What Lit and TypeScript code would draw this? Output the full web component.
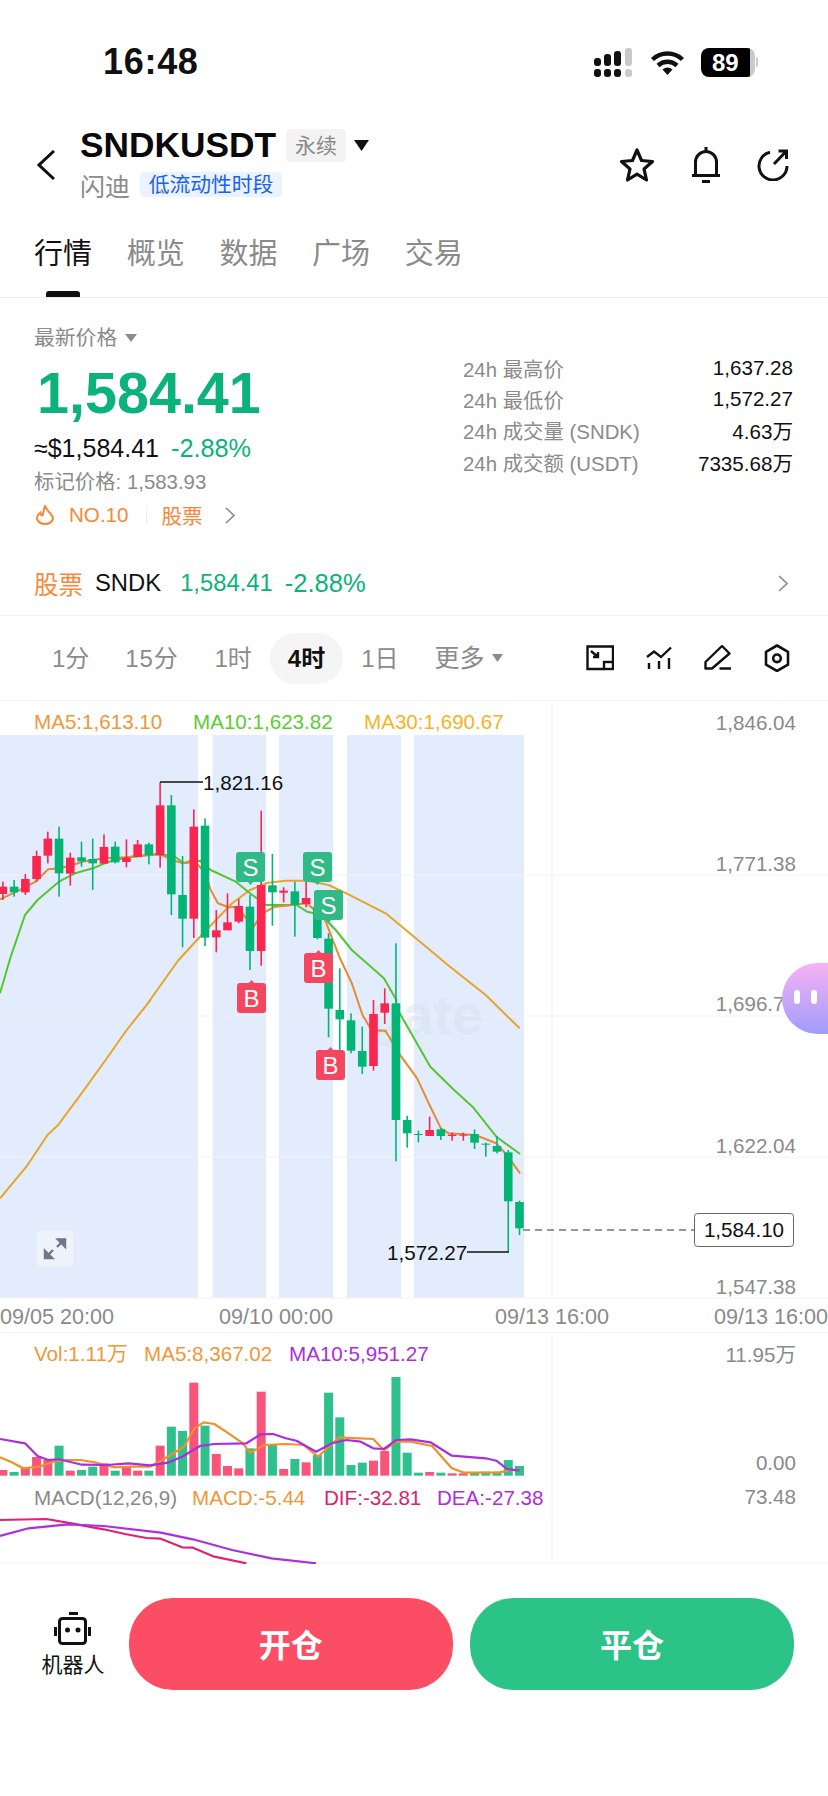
import { LitElement, html, css, svg } from "lit";
import { customElement } from "lit/decorators.js";

type C = [string, number, number, number, number];
// y values are measured in (y-700)*3 units
const candles: C[] = [
  ["r",545,600,560,582],["g",540,590,560,577],["r",522,585,537,577],["r",452,545,468,537],
  ["r",395,490,416,467],["g",380,590,416,520],["r",458,557,473,521],["g",425,500,472,484],
  ["g",416,570,477,490],["r",403,492,441,491],["g",425,490,440,487],["r",418,502,473,486],
  ["r",420,472,433,471],["g",428,493,433,466],["r",247,503,316,466],["g",285,645,316,583],
  ["g",468,742,585,656],["r",328,714,380,656],["g",355,738,377,713],["r",630,757,691,712],
  ["r",580,690,667,691],["r",597,670,618,665],["g",585,810,620,753],["r",332,797,555,753],
  ["g",462,677,556,577],["r",562,607,572,578],["g",545,710,574,615],["r",545,622,594,612],
  ["g",600,718,620,714],["g",700,1012,716,926],["g",805,1055,930,958],["g",940,1060,961,1052],
  ["g",980,1122,1053,1100],["r",900,1112,942,1098],["r",865,972,910,938],["g",730,1384,910,1260],
  ["g",1247,1343,1260,1300],["g",1292,1327,1302,1305],["r",1250,1308,1290,1308],["g",1285,1320,1288,1308],
  ["r",1298,1322,1304,1308],["r",1298,1322,1304,1307],["g",1288,1347,1302,1328],["g",1328,1370,1331,1334],
  ["g",1308,1360,1338,1355],["g",1350,1655,1357,1504],["g",1502,1605,1506,1585],
];
const vols: [string, number][] = [
  ["r",450],["g",456],["r",443],["r",411],["r",420],["g",377],["r",452],["g",450],["g",440],["r",430],
  ["g",452],["r",440],["r",452],["g",452],["r",377],["g",320],["g",333],["r",188],["g",317],["r",402],
  ["r",438],["r",445],["g",385],["r",215],["g",372],["r",447],["g",417],["r",427],["g",405],["g",218],
  ["g",292],["g",435],["g",428],["r",422],["r",393],["g",171],["g",398],["g",458],["r",456],["g",458],
  ["r",460],["r",460],["g",458],["g",455],["g",455],["g",420],["g",438],
];
const cx = (i: number) => 2.9 + 11.23 * i;
const Y = (z: number) => 700 + z / 3;
const VY = (z: number) => 1320 + z / 3;

const pts = (a: number[][], fy: (n: number) => number) =>
  a.map(([x, y]) => `${(x / 2.8).toFixed(1)},${fy(y).toFixed(1)}`).join(" ");
const pts4 = (a: number[][]) =>
  a.map(([x, y]) => `${(x / 1.894).toFixed(1)},${(1000 + y / 3).toFixed(1)}`).join(" ");

const ma30 = pts4([[0,595],[50,500],[90,405],[110,375],[150,290],[200,180],[240,90],[285,0]]) + " " +
  pts([[400,930],[500,780],[560,710],[600,665],[650,610],[700,570],[750,548],[800,542],[860,542],[920,555],[970,580],[1080,640],[1170,720],[1260,800],[1360,885],[1455,985]], Y);
const ma10 = pts([[0,880],[30,770],[70,645],[105,600],[165,545],[210,520],[260,505],[300,487],[355,472],[415,465],[449,462],[490,470],[515,490],[560,482],[590,510],[660,545],[700,580],[745,615],[800,615],[830,615],[860,635],[900,645],[940,690],[985,750],[1075,835],[1110,900]], Y) + " " +
  pts4([[750,20],[815,200],[860,270],[895,320],[940,410],[985,462]]);
const ma5 = pts([[0,598],[40,578],[100,545],[135,508],[166,505],[198,497],[230,485],[260,480],[292,475],[355,472],[418,465],[449,462],[481,480],[512,490],[543,480],[575,520],[590,570],[610,610],[640,622],[670,620],[685,650],[710,680],[735,640],[770,620],[800,617],[860,610],[890,640],[910,660],[950,770],[985,850],[1015,945],[1040,990],[1080,992]], Y) + " " +
  pts4([[715,92],[730,92],[760,170],[790,235],[815,320],[835,385],[850,400],[900,405],[940,430],[960,465],[985,520]]);

const volMa5 = pts([[0,412],[30,425],[65,445],[110,440],[150,425],[190,420],[225,420],[270,428],[320,442],[370,440],[420,440],[470,410],[515,380],[545,325],[570,307],[600,312],[640,340],[680,370],[700,398],[740,375],[800,372],[850,375],[890,410],[950,352],[1045,357],[1075,390],[1110,365],[1150,365],[1210,378],[1265,445],[1300,458],[1400,457],[1430,450],[1455,452]], VY);
const volMa10 = pts([[0,357],[70,370],[105,408],[135,420],[165,418],[230,434],[300,435],[360,430],[420,436],[470,428],[510,410],[560,378],[600,372],[690,370],[730,343],[765,342],[800,355],[830,362],[885,395],[930,370],[970,360],[1010,365],[1045,385],[1075,387],[1110,360],[1150,358],[1205,367],[1265,407],[1360,415],[1390,422],[1420,447],[1455,452]], VY);
const dif = pts([[0,600],[130,597],[200,610],[290,628],[350,642],[410,654],[450,656],[510,682],[540,683],[600,710],[690,730]], VY);
const dea = pts([[0,648],[80,625],[190,613],[290,618],[450,638],[540,658],[650,690],[760,715],[885,730]], VY);

const bands = [[0,198],[212.5,266],[279,333],[347,401],[414,524]];

const sBadge = (x: number, y: number) => svg`
  <path class="bs" d="M${x + 11} ${y + 29}l3.5 4 3.5-4z"></path>
  <rect class="bs" x=${x} y=${y} width="29" height="30" rx="3"></rect>
  <text class="bt" x=${x + 14.5} y=${y + 23.5} text-anchor="middle">S</text>`;
const bBadge = (x: number, y: number) => svg`
  <path class="bb" d="M${x + 11} ${y + 1}l3.5-4 3.5 4z"></path>
  <rect class="bb" x=${x} y=${y} width="29" height="30" rx="3"></rect>
  <text class="bt" x=${x + 14.5} y=${y + 23.5} text-anchor="middle">B</text>`;

@customElement("app-root")
export class AppRoot extends LitElement {
  static styles = css`
    :host { display: block; width: 828px; height: 1796px; background: #fff; position: relative; overflow: hidden;
      font-family: "Liberation Sans", "Noto Sans CJK SC", sans-serif; color: #111; }
    * { box-sizing: border-box; }
    svg { display: block; flex: none; }
    .status { height: 122px; display: flex; align-items: center; padding: 2px 70px 0 103px; }
    .time { font-size: 36px; font-weight: 700; letter-spacing: 0.7px; color: #111; }
    .sys { margin-left: auto; display: flex; align-items: center; gap: 16px; }
    .batt { width: 54px; height: 29px; border-radius: 8px; background: linear-gradient(90deg, #000 49px, #c9c9c9 49px);
      color: #fff; font-weight: 700; font-size: 24px; line-height: 29px; padding-left: 11px; }
    .battwrap { display: flex; align-items: center; gap: 1px; width: 57px; }
    .nub { width: 2px; height: 10px; background: #c9c9c9; border-radius: 0 2px 2px 0; }

    .head { height: 100px; display: flex; align-items: flex-start; padding-left: 37px; }
    .back { margin-top: 28px; margin-right: 25px; }
    .titles { padding-top: 5px; }
    .tl { display: flex; align-items: center; height: 36px; }
    .sym { font-size: 35.3px; font-weight: 700; color: #0a0a0a; letter-spacing: 0; }
    .perp { margin-left: 10px; width: 60px; height: 33px; background: #f3f3f3; border-radius: 4px; color: #8a8a8a;
      font-size: 21px; line-height: 33px; text-align: center; }
    .caret { margin-left: 8px; }
    .sl { display: flex; align-items: center; margin-top: 9px; height: 25px; }
    .cn { font-size: 25px; color: #8b8b8b; }
    .low { margin-left: 10px; height: 25px; width: 142px; background: #eaf3ff; border-radius: 4px; color: #1a62e8;
      font-size: 20.8px; line-height: 25px; text-align: center; }
    .tools { margin-left: auto; padding-right: 39px; margin-top: 25px; display: flex; gap: 36px; align-items: center; }

    .tabs { height: 76px; display: flex; gap: 34.7px; padding-left: 34px; border-bottom: 1px solid #eeeeee; }
    .tab { display: flex; flex-direction: column; align-items: center; padding-top: 15px; font-size: 29px; line-height: 34px; color: #8a8a8a; }
    .tab.on { color: #111; }
    .bar { margin-top: auto; width: 34px; height: 6px; border-radius: 3px 3px 0 0; background: #111; }

    .quote { height: 252px; display: flex; justify-content: space-between; padding: 0 35px 0 34px; }
    .lab { padding-top: 29px; display: flex; align-items: center; gap: 8px; font-size: 20.8px; line-height: 21px; color: #8b8b8b; }
    .big { margin-top: 15px; margin-left: 3px; font-size: 57.5px; line-height: 60px; font-weight: 700; color: #0bb37a; }
    .usd { margin-top: 10px; display: flex; gap: 12px; font-size: 25px; line-height: 30px; }
    .usd .grn { font-size: 25.3px; }
    .grn { color: #0bb37a; }
    .mark { margin-top: 6px; font-size: 20.4px; line-height: 26px; color: #8b8b8b; }
    .tags { margin-top: 5px; height: 30px; display: flex; align-items: center; font-size: 20.6px; color: #f7883a; }
    .no { margin-left: 14px; }
    .div { width: 1px; height: 18px; background: #eee; margin: 0 15px 0 17px; }
    .chev { margin-left: 22px; }
    .stats { width: 330px; padding-top: 54px; }
    .st { height: 31.3px; display: flex; justify-content: space-between; align-items: center; font-size: 20.4px; color: #8b8b8b; }
    .st b { font-weight: 400; color: #111; font-size: 20.6px; }

    .stock { height: 66px; display: flex; align-items: center; padding: 1px 40px 0 34px; border-bottom: 1px solid #f3f3f3; font-size: 23.8px; }
    .stock .o { color: #f7883a; font-size: 24.5px; }
    .stock .s { margin-left: 12px; color: #111; }
    .stock .p { margin-left: 19px; color: #0bb37a; }
    .stock .q { margin-left: 12px; color: #0bb37a; font-size: 25.5px; }
    .stock svg { margin-left: auto; }

    .frames { height: 84px; display: flex; align-items: center; padding: 0 37px 0 34px; }
    .f { height: 51px; line-height: 51px; padding: 0 18px; font-size: 24px; color: #8b8b8b; white-space: nowrap; display: flex; align-items: center; gap: 7px; }
    .f.wide { letter-spacing: 0.8px; }
    .f.more { font-size: 25px; }
    .f.on { background: #f5f5f5; border-radius: 26px; color: #111; font-weight: 700; }
    .ics { margin-left: auto; display: flex; gap: 31px; }

    .chart text { font-family: "Liberation Sans", "Noto Sans CJK SC", sans-serif; font-size: 20.6px; }
    .grid { stroke: #f3f3f3; stroke-width: 1.2; fill: none; }
    .band { fill: #e3ecfc; }
    .wm { font-size: 56px !important; font-weight: 700; fill: #d9e1f0; opacity: .5; }
    .line { fill: none; stroke-width: 2; stroke-linejoin: round; }
    .m5 { stroke: #e58a35; } .m10 { stroke: #55c532; } .m30 { stroke: #e5a52b; }
    .vm { stroke: #ef9028; stroke-width: 2.2; } .vp { stroke: #a92ee0; stroke-width: 2.2; }
    .dif { stroke: #df2273; stroke-width: 2.2; } .dea { stroke: #ad2fe0; stroke-width: 2.2; }
    .cr { fill: #f9264f; } .cg { fill: #03b575; }
    .vr { fill: #f9557a; } .vg { fill: #2ec08d; }
    .bs { fill: #2fba86; } .bb { fill: #f4475f; }
    .bt { fill: #fff; font-size: 24px !important; }
    .ax { fill: #8a8a8a; }
    .tm { fill: #8a8a8a; font-size: 21.6px !important; }
    .blk { fill: #111; }
    .lo { fill: #f0973a; } .lg { fill: #5ecb34; } .ly { fill: #f5b32a; } .lp { fill: #a92fe0; } .lk { fill: #db2270; } .lv { fill: #ad2fdc; }
    .ld { stroke: #111; stroke-width: 1.4; fill: none; }
    .dash { stroke: #333; stroke-width: 1.2; stroke-dasharray: 7 5; fill: none; }
    .tagbox { fill: #fff; stroke: #666; stroke-width: 1; }
    .exp { fill: #eef3fb; stroke: #e6ecf6; }
    .ar { stroke: #6c7787; stroke-width: 2.4; fill: #6c7787; }

    .blob { position: absolute; left: 782px; top: 963px; width: 46px; height: 71px; border-radius: 36px 0 0 36px;
      background: linear-gradient(180deg, #f7b2f4, #9f9cfb); display: flex; gap: 11px; padding: 27px 0 0 12px; }
    .eye { width: 6px; height: 14px; border-radius: 3px; background: #fff; }

    .bottom { height: 232px; padding: 34px 34px 0 34px; display: flex; gap: 17px; }
    .robot { width: 78px; padding-top: 14px; display: flex; flex-direction: column; align-items: center; gap: 9px; font-size: 21px; line-height: 22px; color: #111; }
    .btn { width: 325px; height: 92px; border-radius: 44px; color: #fff; font-size: 32px; font-weight: 700; display: flex; align-items: center; justify-content: center; padding-bottom: 3px; }
    .open { background: #fb4d63; } .close { background: #2cc386; }
  `;

  private chart() {
    return html`<svg class="chart" width="828" height="864" viewBox="0 700 828 864">
      ${bands.map(([a, b]) => svg`<rect class="band" x=${a} y="735" width=${b - a} height="563"></rect>`)}
      <path class="grid" d="M0 700.5H828M0 875H828M0 1016H828M0 1157H828M0 1298H828M552 700V1298M0 1332.5H828M552 1332V1563M0 1563H828"></path>
      <text class="wm" x="368" y="1034">gate</text>
      <polyline class="line m30" points=${ma30}></polyline>
      <polyline class="line m10" points=${ma10}></polyline>
      <polyline class="line m5" points=${ma5}></polyline>
      ${candles.map(([c, wt, wb, bt, bb], i) => {
        const x = cx(i);
        return svg`<g class=${c === "r" ? "cr" : "cg"}><rect x=${x - 0.8} y=${Y(wt)} width="1.6" height=${(wb - wt) / 3}></rect>
          <rect x=${x - 4.3} y=${Y(bt)} width="8.6" height=${Math.max((bb - bt) / 3, 1)}></rect></g>`;
      })}
      ${sBadge(236, 852)}${sBadge(303, 852)}${sBadge(314, 890)}
      ${bBadge(237, 983)}${bBadge(304, 953)}${bBadge(316, 1050)}

      <path class="ld" d="M160 782H203"></path>
      <text class="blk" x="203" y="790">1,821.16</text>
      <path class="ld" d="M467 1252H509"></path>
      <text class="blk" x="387" y="1260">1,572.27</text>

      <path class="dash" d="M523 1230H694"></path>
      <rect class="tagbox" x="694.5" y="1213.5" width="99" height="33" rx="3"></rect>
      <text class="blk" x="744" y="1237" text-anchor="middle">1,584.10</text>

      <text class="lo" x="34" y="729">MA5:1,613.10</text>
      <text class="lg" x="193" y="729">MA10:1,623.82</text>
      <text class="ly" x="364" y="729">MA30:1,690.67</text>

      <g class="ax" text-anchor="end">
        <text x="796" y="730">1,846.04</text>
        <text x="796" y="871">1,771.38</text>
        <text x="796" y="1011">1,696.71</text>
        <text x="796" y="1153">1,622.04</text>
        <text x="796" y="1294">1,547.38</text>
        <text x="796" y="1362">11.95万</text>
        <text x="796" y="1470">0.00</text>
        <text x="796" y="1504">73.48</text>
      </g>
      <text class="tm" x="0" y="1324">09/05 20:00</text>
      <text class="tm" x="219" y="1324">09/10 00:00</text>
      <text class="tm" x="495" y="1324">09/13 16:00</text>
      <text class="tm" x="714" y="1324">09/13 16:00</text>

      <rect class="exp" x="36.5" y="1230.5" width="37" height="37" rx="4"></rect>
      <path class="ar" d="M46 1257L53 1250M64 1240L57 1247"></path>
      <path class="ar" stroke="none" d="M58 1239.5H65V1246.5ZM45 1251V1258H52Z"></path>

      <text class="lo" x="34" y="1361">Vol:1.11万</text>
      <text class="lo" x="144" y="1361">MA5:8,367.02</text>
      <text class="lp" x="289" y="1361">MA10:5,951.27</text>
      ${vols.map(([c, t], i) => svg`<rect class=${c === "r" ? "vr" : "vg"} x=${cx(i) - 4.5} y=${VY(t)} width="9" height=${(467 - t) / 3}></rect>`)}
      <polyline class="line vm" points=${volMa5}></polyline>
      <polyline class="line vp" points=${volMa10}></polyline>

      <text class="ax" x="34" y="1505">MACD(12,26,9)</text>
      <text class="lo" x="192" y="1505">MACD:-5.44</text>
      <text class="lk" x="324" y="1505">DIF:-32.81</text>
      <text class="lv" x="437" y="1505">DEA:-27.38</text>
      <polyline class="line dif" points=${dif}></polyline>
      <polyline class="line dea" points=${dea}></polyline>
    </svg>`;
  }

  render() {
    return html`
      <div class="status">
        <div class="time">16:48</div>
        <div class="sys">
          <svg width="40" height="29" viewBox="0 0 40 29">
            <g fill="#111">
              <rect x="0" y="21" width="7" height="8" rx="3"></rect><rect x="10" y="21" width="7" height="8" rx="3"></rect><rect x="20" y="21" width="7" height="8" rx="3"></rect>
              <rect x="0" y="10" width="7" height="8" rx="3"></rect><rect x="10" y="6" width="7" height="12" rx="3"></rect><rect x="20" y="3" width="7" height="15" rx="3"></rect>
            </g>
            <g fill="#c9c9c9"><rect x="31" y="21" width="7" height="8" rx="3"></rect><rect x="31" y="0" width="7" height="18" rx="3"></rect></g>
          </svg>
          <svg width="35" height="25" viewBox="0 0 35 25" fill="none" stroke="#111" stroke-width="4.4">
            <path d="M2.5 9.5C11 1.5 24 1.5 32.500 9.500"></path>
            <path d="M8 15.500C13.500 10.500 21.500 10.500 27 15.500"></path>
            <path d="M12.500 19.500L17.500 25L22.500 19.500C19.500 16.800 15.500 16.800 12.500 19.500Z" fill="#111" stroke="none"></path>
          </svg>
          <div class="battwrap"><div class="batt">89</div><div class="nub"></div></div>
        </div>
      </div>

      <div class="head">
        <svg class="back" width="18" height="30" viewBox="0 0 18 30" fill="none" stroke="#111" stroke-width="3"><path d="M17 1L2 15L17 29"></path></svg>
        <div class="titles">
          <div class="tl">
            <span class="sym">SNDKUSDT</span><span class="perp">永续</span>
            <svg class="caret" width="15" height="11" viewBox="0 0 15 11"><path d="M0 0H15L7.500 11Z" fill="#111"></path></svg>
          </div>
          <div class="sl"><span class="cn">闪迪</span><span class="low">低流动性时段</span></div>
        </div>
        <div class="tools">
          <svg width="36" height="36" viewBox="0 0 36 36" fill="none" stroke="#111" stroke-width="3.2" stroke-linejoin="round">
            <path d="M18 3L22.500 13.500L33.500 14.500L25 22L27.500 33L18 27.200L8.500 33L11 22L2.500 14.500L13.500 13.500Z"></path>
          </svg>
          <svg width="30" height="36" viewBox="0 0 30 36" fill="none" stroke="#111" stroke-width="3">
            <path d="M4.500 28V15a10.500 10.500 0 0 1 21 0V28M1 28.500H29M15 0V5"></path><path d="M11 34.500H19"></path>
          </svg>
          <svg width="32" height="32" viewBox="0 0 32 32" fill="none" stroke="#111" stroke-width="3">
            <path d="M13 3.300A14 14 0 1 0 30 17"></path><path d="M17 15L29 2.500M21.500 2H29.500V10"></path>
          </svg>
        </div>
      </div>

      <div class="tabs">
        <div class="tab on">行情<div class="bar"></div></div>
        <div class="tab">概览</div>
        <div class="tab">数据</div>
        <div class="tab">广场</div>
        <div class="tab">交易</div>
      </div>

      <div class="quote">
        <div>
          <div class="lab">最新价格<svg width="12" height="8" viewBox="0 0 12 8"><path d="M0 0H12L6 8Z" fill="#8b8b8b"></path></svg></div>
          <div class="big">1,584.41</div>
          <div class="usd"><span>≈$1,584.41</span><span class="grn">-2.88%</span></div>
          <div class="mark">标记价格: 1,583.93</div>
          <div class="tags">
            <svg width="21" height="23" viewBox="0 0 21 23" fill="none" stroke="#f7883a" stroke-width="2"><path d="M11 1.500C12 7 19 10 19 15A8.500 7.500 0 0 1 3 15C3 12 5 9.500 6.500 8.500C6.500 10.500 7.500 11.500 8.500 11.500C9.500 8.500 10 4.500 11 1.500Z"></path></svg>
            <span class="no">NO.10</span><span class="div"></span><span>股票</span>
            <svg class="chev" width="10" height="17" viewBox="0 0 10 17" fill="none" stroke="#8b8b8b" stroke-width="1.600"><path d="M1 1L9 8.500L1 16"></path></svg>
          </div>
        </div>
        <div class="stats">
          <div class="st"><span>24h 最高价</span><b>1,637.28</b></div>
          <div class="st"><span>24h 最低价</span><b>1,572.27</b></div>
          <div class="st"><span>24h 成交量 (SNDK)</span><b>4.63万</b></div>
          <div class="st"><span>24h 成交额 (USDT)</span><b>7335.68万</b></div>
        </div>
      </div>

      <div class="stock">
        <span class="o">股票</span><span class="s">SNDK</span><span class="p">1,584.41</span><span class="q">-2.88%</span>
        <svg width="10" height="17" viewBox="0 0 10 17" fill="none" stroke="#8b8b8b" stroke-width="1.600"><path d="M1 1L9 8.500L1 16"></path></svg>
      </div>

      <div class="frames">
        <span class="f">1分</span><span class="f wide">15分</span><span class="f">1时</span><span class="f on">4时</span><span class="f">1日</span>
        <span class="f more">更多<svg width="11" height="8" viewBox="0 0 11 8"><path d="M0 0H11L5.500 8Z" fill="#8b8b8b"></path></svg></span>
        <div class="ics">
          <svg width="28" height="28" viewBox="0 0 28 28" fill="none" stroke="#111" stroke-width="2.400">
            <path d="M18 25H1.500V2.500H27V18"></path><rect x="18" y="18" width="9" height="7"></rect><path d="M5 7L12 13M12 8V13H7"></path>
          </svg>
          <svg width="28" height="28" viewBox="0 0 28 28" fill="none" stroke="#111" stroke-width="2.400">
            <path d="M2 13L9 7.500L16 13L26 3.500M4 19V25M14 17V25M24 14V25"></path>
          </svg>
          <svg width="28" height="28" viewBox="0 0 28 28" fill="none" stroke="#111" stroke-width="2.400" stroke-linejoin="round">
            <path d="M1.500 18L18 2L25.500 9.500L8 24.500H1.500ZM15.500 24.500H27"></path>
          </svg>
          <svg width="28" height="28" viewBox="0 0 28 28" fill="none" stroke="#111" stroke-width="2.600" stroke-linejoin="round">
            <path d="M14 1.500L25 7.800V20.700L14 27L3 20.700V7.800Z"></path><circle cx="14" cy="14.300" r="3.800"></circle>
          </svg>
        </div>
      </div>

      ${this.chart()}

      <div class="blob"><span class="eye"></span><span class="eye"></span></div>

      <div class="bottom">
        <div class="robot">
          <svg width="37" height="33" viewBox="0 0 37 33">
            <rect x="15" y="0" width="9" height="3" fill="#111"></rect>
            <rect x="5.500" y="6.500" width="26" height="25" rx="3" fill="none" stroke="#111" stroke-width="3"></rect>
            <rect x="0" y="15" width="3" height="9" fill="#111"></rect><rect x="34" y="15" width="3" height="9" fill="#111"></rect>
            <circle cx="13.500" cy="18" r="2.500" fill="#111"></circle><circle cx="24" cy="18" r="2.500" fill="#111"></circle>
          </svg>
          <span>机器人</span>
        </div>
        <div class="btn open">开仓</div>
        <div class="btn close">平仓</div>
      </div>
    `;
  }
}
